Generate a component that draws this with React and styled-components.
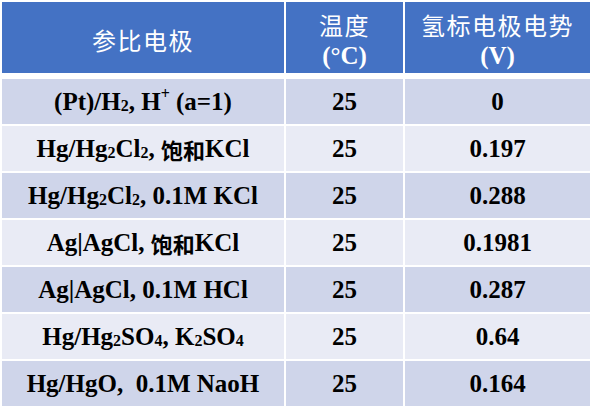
import React from "react";
import styled, { createGlobalStyle } from "styled-components";

const GlobalStyle = createGlobalStyle`
  html, body { margin: 0; padding: 0; background: #ffffff; }
  body { width: 596px; height: 415px; overflow: hidden; }
`;

const serif = `"Liberation Serif", "Times New Roman", Tinos, serif`;

const Table = styled.div`
  display: flex;
  flex-direction: column;
  gap: 2px;
  padding: 2px 0 0 2px;
`;

const Row = styled.div`
  display: grid;
  grid-template-columns: 282px 117px 185px;
  column-gap: 2px;
  height: ${(p) => (p.$header ? "71px" : "45px")};
  margin-bottom: ${(p) => (p.$header ? "4px" : "0")};
`;

const HeadCell = styled.div`
  background: #4472c4;
  color: #ffffff;
  display: flex;
  flex-direction: column;
  align-items: center;
  justify-content: center;
  font-family: "Noto Sans CJK SC", sans-serif;
  font-weight: 400;
  font-size: 24px;
  letter-spacing: 1.5px;
  line-height: 31px;
  padding-top: 4px;
`;

const Unit = styled.span`
  font-family: ${serif};
  font-weight: 700;
  letter-spacing: 0;
  font-size: 25px;
`;

const Cell = styled.div`
  background: ${(p) => (p.$odd ? "#cfd5ea" : "#e9ebf5")};
  color: #000000;
  display: flex;
  align-items: center;
  justify-content: center;
  font-family: ${serif};
  font-weight: 700;
  font-size: 25px;
  white-space: pre;
`;

const Sub = styled.span`
  font-size: 16px;
  position: relative;
  top: 4px;
`;

const Sup = styled.span`
  font-size: 16px;
  position: relative;
  top: -8px;
`;

const Cjk = styled.span`
  font-family: "Noto Sans CJK SC", sans-serif;
  font-weight: 700;
  font-size: 22px;
`;

const rows = [
  [<>(Pt)/H<Sub>2</Sub>, H<Sup>+</Sup> (a=1)</>, "25", "0"],
  [<>Hg/Hg<Sub>2</Sub>Cl<Sub>2</Sub>, <Cjk>饱和</Cjk>KCl</>, "25", "0.197"],
  [<>Hg/Hg<Sub>2</Sub>Cl<Sub>2</Sub>, 0.1M KCl</>, "25", "0.288"],
  [<>Ag|AgCl, <Cjk>饱和</Cjk>KCl</>, "25", "0.1981"],
  [<>Ag|AgCl, 0.1M HCl</>, "25", "0.287"],
  [<>Hg/Hg<Sub>2</Sub>SO<Sub>4</Sub>, K<Sub>2</Sub>SO<Sub>4</Sub></>, "25", "0.64"],
  [<>Hg/HgO,  0.1M NaoH</>, "25", "0.164"],
];

export default function App() {
  return (
    <>
      <GlobalStyle />
      <Table>
        <Row $header>
          <HeadCell>参比电极</HeadCell>
          <HeadCell>
            <span>温度</span>
            <Unit>(°C)</Unit>
          </HeadCell>
          <HeadCell>
            <span>氢标电极电势</span>
            <Unit>(V)</Unit>
          </HeadCell>
        </Row>
        {rows.map((r, i) => (
          <Row key={i}>
            <Cell $odd={i % 2 === 0}>{r[0]}</Cell>
            <Cell $odd={i % 2 === 0}>{r[1]}</Cell>
            <Cell $odd={i % 2 === 0}>{r[2]}</Cell>
          </Row>
        ))}
      </Table>
    </>
  );
}
